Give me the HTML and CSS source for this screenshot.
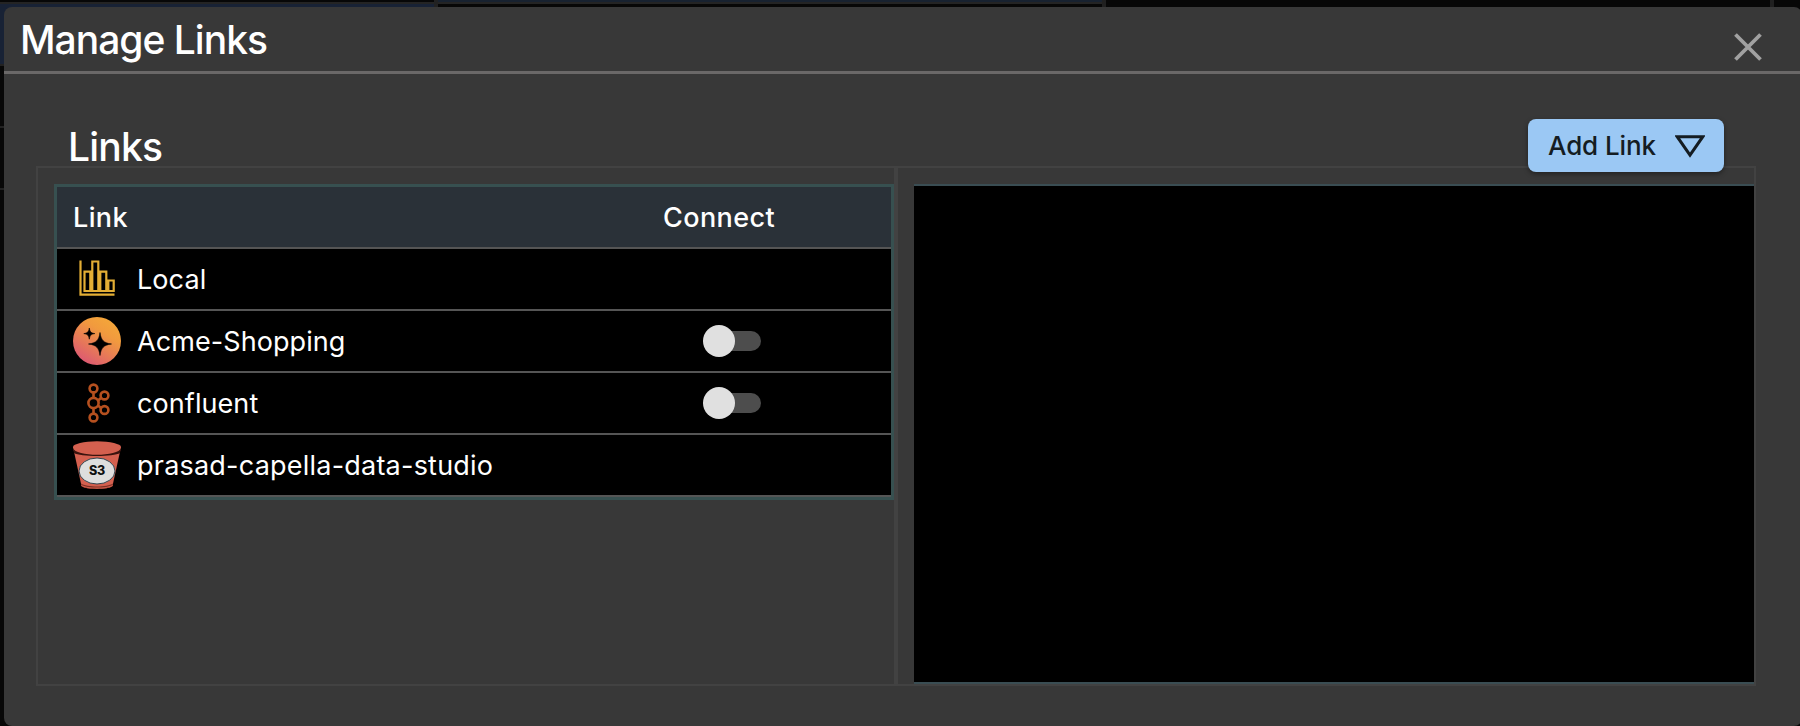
FILE: index.html
```html
<!DOCTYPE html>
<html lang="en">
<head>
<meta charset="utf-8">
<title>Manage Links</title>
<link rel="stylesheet" href="styles.css">
</head>
<body>
<div class="backdrop">
  <div class="pane pane-first"></div>
  <div class="pane pane-second"></div>
  <div class="pane pane-third"></div>
</div>
<main class="dialog">
  <header class="dialog-header">
    <h1 class="title">Manage Links</h1>
    <svg class="close" viewBox="0 0 28 28"><path d="M1.5 1.5 26.5 26.5M26.5 1.5 1.5 26.5"/></svg>
  </header>
  <div class="toolbar">
    <h2 class="subtitle">Links</h2>
    <button class="add"><span>Add Link</span>
      <svg class="triangle" viewBox="0 0 30 23"><path d="M2.2 1.7H27.8L15 20.2Z"/></svg>
    </button>
  </div>
  <div class="split">
    <section class="left">
      <div class="table">
        <div class="row head"><span class="name">Link</span><span class="connect">Connect</span></div>
        <div class="row">
          <svg class="icon" viewBox="0 0 48 48" fill="none" stroke="#e3ae35" stroke-width="2.200"><path d="M7.500 5.500V39.700H41.500M11.500 36V16.700H17.300V36ZM19.300 36V6.500H25.300V36ZM27.300 36V16.700H33.300V36ZM35.300 36V25.500H40.700V36Z"/></svg>
          <span class="name">Local</span>
        </div>
        <div class="row">
          <svg class="icon" viewBox="0 0 48 48"><defs><linearGradient id="sun" x1=".2" y1=".95" x2=".75" y2=".1"><stop offset="0" stop-color="#dc5773"/><stop offset=".75" stop-color="#f19a3e"/><stop offset="1" stop-color="#f3a43a"/></linearGradient></defs><circle cx="24" cy="24" r="24" fill="url(#sun)"/><path d="M27 15.500C28 23 30.500 26 38.500 27C30.500 28 28 31 27 38.500C26 31 23.500 28 15.500 27C23.500 26 26 23 27 15.500ZM16.300 11C17 15 18 16 21.800 16.600C18 17.200 17 18.200 16.300 22.200C15.600 18.200 14.600 17.200 10.800 16.600C14.600 16 15.600 15 16.300 11Z" stroke="#000" stroke-width=".6"/></svg>
          <span class="name">Acme-Shopping</span><span class="switch"><i class="knob"></i></span>
        </div>
        <div class="row">
          <svg class="icon" viewBox="0 0 48 48" fill="none" stroke="#b5501f" stroke-width="2.600"><circle cx="20.500" cy="9.500" r="3.900"/><circle cx="20.500" cy="24" r="5.100"/><circle cx="20.500" cy="38.500" r="3.900"/><circle cx="31.500" cy="16.500" r="3.900"/><circle cx="31.500" cy="31" r="3.900"/><path d="M20.500 13.500V19M20.500 29V34.500M25 21.500 28 19M25 26.500 28 29"/></svg>
          <span class="name">confluent</span><span class="switch"><i class="knob"></i></span>
        </div>
        <div class="row">
          <svg class="icon" viewBox="0 0 48 48"><path d="M0 6 8.500 45C12 49 36 49 39.500 45L48 6Z" fill="#d4604f"/><path d="M8 42.500C14 46.500 34 46.500 40 42.500L39.500 45C36 49 12 49 8.500 45Z" fill="#7c3025"/><path d="M8.300 43.700C14 47.500 34 47.500 39.700 43.700L39.500 45C34 48.500 14 48.500 8.500 45Z" fill="#d4604f"/><path d="M0 7C2 16 46 16 48 7L47 12C41 16 7 16 1 12Z" fill="#3a130e"/><ellipse cx="24" cy="6" rx="24" ry="5.800" fill="#d4604f"/><ellipse cx="24" cy="30" rx="18" ry="13" fill="#dedede" stroke="#34444e"/><text class="s3" x="24" y="34" text-anchor="middle">S3</text></svg>
          <span class="name long">prasad-capella-data-studio</span>
        </div>
      </div>
    </section>
    <section class="right"><div class="detail"></div></section>
  </div>
</main>
</body>
</html>
```
FILE: styles.css
```css
* { box-sizing: border-box; }
body { margin: 0; width: 1800px; height: 726px; overflow: hidden; background: #070707; color: #fff; font-family: Inter, "Liberation Sans", sans-serif; font-size: 27px; }
.backdrop { position: absolute; inset: 0; display: flex; }
.pane-first { width: 438px; border-right: 4px solid #222; background: linear-gradient(#070707 2px, #242424 2px 4px, #182235 4px 64px, #222 64px 66px, #070707 66px 126px, #222 126px 128px, #070707 128px 188px, #222 188px 190px, #070707 190px); }
.pane-second { width: 668px; border-right: 4px solid #202020; background: linear-gradient(#182230 2px, #242424 2px 4px, #070707 4px); }
.pane-third { width: 668px; border-right: 4px solid #202020; }
.dialog { position: relative; width: 1798px; height: 719px; margin: 7px 0 0 4px; border-radius: 8px; background: #383838; }
.dialog-header { display: flex; justify-content: space-between; height: 67px; padding: 0 40px 0 16px; border-bottom: 3px solid #6a6868; }
.title, .subtitle { margin: 0; font-size: 39px; font-weight: 450; line-height: 48px; letter-spacing: -.8px; }
.title { padding-top: 9px; letter-spacing: -1px; }
.close { width: 28px; height: 28px; margin-top: 26px; fill: none; stroke: #a1a1a1; stroke-width: 3.8; }
.toolbar { display: flex; justify-content: space-between; height: 92px; padding: 45px 78px 0 64px; }
.subtitle { padding-top: 4px; }
.add { position: relative; z-index: 1; display: flex; align-items: center; justify-content: space-between; width: 196px; height: 53px; padding: 0 19px 0 20px; border: 0; border-radius: 8px; background: #9bc8f4; color: #141c22; font: 450 26px Inter, sans-serif; letter-spacing: -.1px; box-shadow: 0 2px 5px rgba(0, 0, 0, .4); white-space: nowrap; }
.triangle { width: 30px; height: 23px; margin-top: 2px; fill: none; stroke: #141c22; stroke-width: 3; }
.split { display: flex; width: 1720px; height: 520px; margin-left: 32px; border: 2px solid #424242; }
.left { width: 860px; padding: 16px 0 0 16px; border-right: 4px solid #424242; }
.table { width: 840px; border: 3px solid #375050; background: #000; }
.row { display: flex; align-items: center; height: 62px; padding-left: 16px; border-bottom: 2px solid #555; }
.head { background: #2a3138; font-weight: 450; letter-spacing: .4px; }
.head .name { width: 590px; }
.icon { width: 48px; height: 48px; margin-right: 16px; flex: none; }
.name { white-space: nowrap; }
.row:not(.head) .name { width: 566px; letter-spacing: .08px; }
.row:not(.head) .long { letter-spacing: .22px; }
.switch { display: flex; align-items: center; width: 57px; height: 20px; margin-left: 1px; border-radius: 10px; background: #4d4d4d; }
.knob { width: 32px; height: 32px; margin-left: -1px; border-radius: 50%; background: #e0e0e0; flex: none; }
.s3 { font: 800 12.5px Inter, sans-serif; letter-spacing: -.3px; fill: #111; }
.right { flex: 1; padding: 16px 0 0 16px; }
.detail { height: 500px; border: solid #3a4d53; border-width: 2px 0; background: #000; }
```
